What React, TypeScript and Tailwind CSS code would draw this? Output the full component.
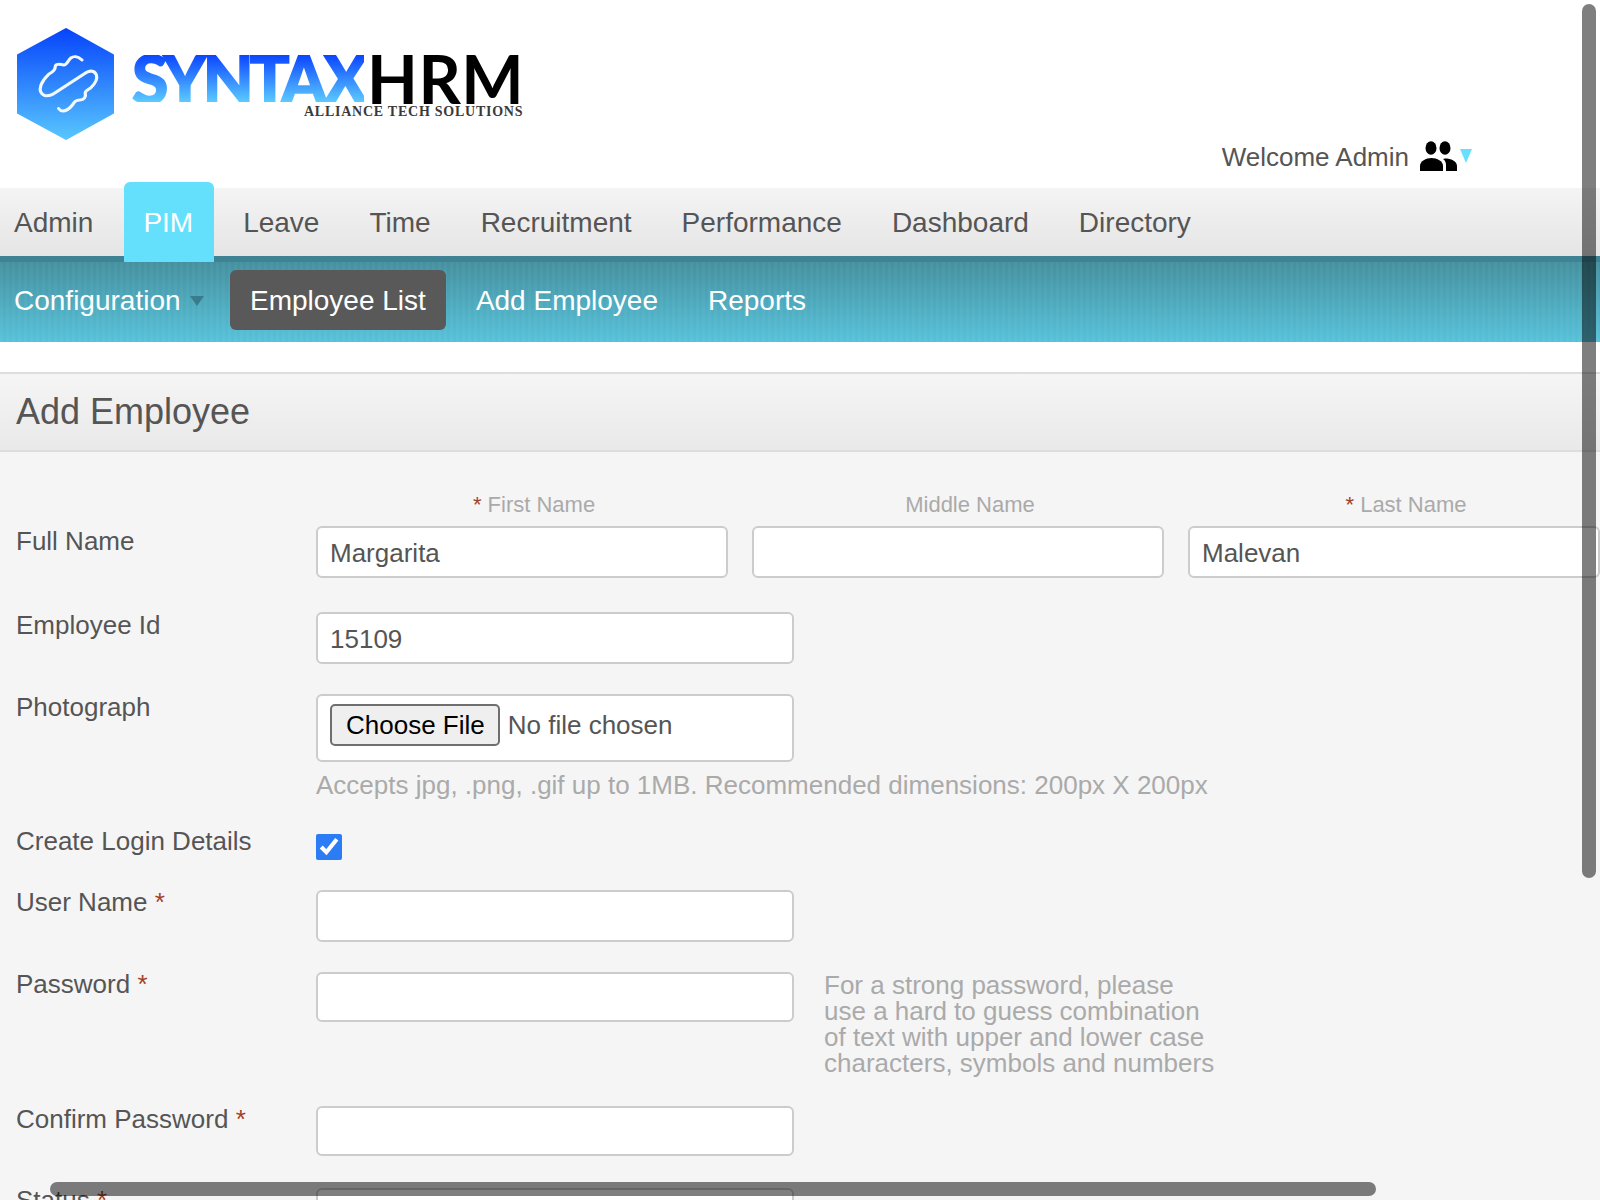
const topMenu = ["Leave", "Time", "Recruitment", "Performance", "Dashboard", "Directory"];
const inputClass = "rounded-[6px] border-2 border-[#cccccc] bg-white px-[12px] pt-[2px] text-[26px] text-[#555555] outline-none";
const nameHintClass = "mb-[10px] h-[24px] pl-[24px] pt-[1px] text-center text-[22px] leading-[24px] text-[#aaaaaa]";

function Required() {
  return <span className="text-[#a33f27]">*</span>;
}

function Logo() {
  return (
    <div className="flex items-start pl-[17px] pt-[28px]">
      <svg viewBox="16 28 91 112" preserveAspectRatio="none" className="h-[112px] w-[97px] shrink-0">
        <defs>
          <linearGradient id="hexFill" x1="0" y1="0" x2="0" y2="1">
            <stop offset="0" stopColor="#0644fb" />
            <stop offset="1" stopColor="#58c6ff" />
          </linearGradient>
        </defs>
        <path d="M62 29 L106 55 V113 L62 139 L17 113 V55 Z" fill="url(#hexFill)" stroke="url(#hexFill)" strokeWidth="2" strokeLinejoin="round" />
        <path
          d="M77 60 C73 56 69 56 66.5 58 C64 60 63 65 60 65 C56 64 52 64 52 66 C52 70 50 72 46 74 C43 77 40 81 38.5 85 C37 90 38 94 42 95.5 C45 96 47 96 50 94 L81 72.5 C85 70 89 71 90.5 75 C92 80 88 85 85 88 C82 90 80 91 80 93 C81 97 79 100 75 100 C71 100 70 102 68 105 C65 109 62 111 59 111 C57 111 56 110 55 108.5"
          fill="none"
          stroke="#f2f9ff"
          strokeWidth="3"
          strokeLinecap="round"
          strokeLinejoin="round"
        />
      </svg>
      <div className="ml-[18px] mt-[27px] flex flex-col items-end font-['Lato',sans-serif]">
        <div className="flex">
          <span className="bg-[linear-gradient(180deg,#0a45ff,#5ccaff)] bg-clip-text text-[66px] font-black leading-[47px] tracking-[-4px] text-transparent [-webkit-text-stroke:1.5px_transparent]">SYNTAX</span>
          <span className="ml-[3px] text-[66px] font-bold leading-[47px] tracking-[0.5px] text-black">HRM</span>
        </div>
        <span className="mr-[1px] mt-[4px] font-['Liberation_Serif',serif] text-[14px] font-bold leading-[11px] tracking-[0.75px] text-[#3a3a3a]">ALLIANCE TECH SOLUTIONS</span>
      </div>
    </div>
  );
}

function PeopleIcon() {
  return (
    <svg viewBox="0 0 37 30" className="ml-[11px] mt-[4px] h-[30px] w-[37px] text-black" fill="currentColor">
      <ellipse cx="11" cy="7" rx="5.5" ry="6.8" />
      <ellipse cx="25" cy="7" rx="5.5" ry="6.8" />
      <path d="M0 30 V25 C0 20 6 17 11.5 17 C17 17 23 20 23 25 V30 Z" />
      <path d="M25 17.5 C31 17.5 37 20 37 25 V30 H26 V24 C26 21.5 25 19 23 18 Z" />
    </svg>
  );
}

function FieldRow({ label, labelClass, children, className }: { label: React.ReactNode; labelClass: string; children: React.ReactNode; className: string }) {
  return (
    <div className={`flex items-start ${className}`}>
      <label className={`ml-[16px] w-[300px] shrink-0 text-[26px] leading-[30px] ${labelClass}`}>{label}</label>
      {children}
    </div>
  );
}

export default function App() {
  return (
    <div className="relative h-[1200px] w-[1600px] overflow-hidden bg-white font-['Liberation_Sans',Arial,sans-serif] text-[#555555]">
      <header className="flex h-[188px] justify-between">
        <Logo />
        <div className="flex items-start pr-[128px] pt-[137px]">
          <span className="text-[26px] leading-[40px]">Welcome Admin</span>
          <PeopleIcon />
          <span className="ml-[3px] mt-[12px] h-0 w-0 border-x-[6px] border-t-[14px] border-x-transparent border-t-[#66e0ff]" />
        </div>
      </header>

      <nav className="flex h-[68px] items-center gap-[10px] bg-[linear-gradient(180deg,#f4f4f4,#e5e5e5)] text-[28px]">
        <a className="pl-[14px] pr-[21px] pt-[2px]">Admin</a>
        <a className="z-10 -mr-[1px] flex h-[80px] items-center rounded-t-[6px] bg-[#64e0fd] pl-[19px] pr-[21px] pt-[2px] text-white">PIM</a>
        {topMenu.map((item) => (
          <a key={item} className="px-[20px] pt-[2px]">{item}</a>
        ))}
      </nav>

      <div className="h-[86px] border-t-[6px] border-[#3f8294] bg-[repeating-linear-gradient(90deg,rgba(255,255,255,0.035)_0,rgba(255,255,255,0.035)_3px,transparent_3px,transparent_6px),linear-gradient(180deg,#44909f,#56c2da)]">
        <div className="flex items-center gap-[10px] pt-[8px] text-[28px] text-white">
          <a className="flex w-[220px] items-center pl-[14px] pt-[2px]">
            Configuration
            <span className="ml-[9px] mt-[-1px] h-0 w-0 border-x-[7px] border-t-[10px] border-x-transparent border-t-[#3a7c8e]" />
          </a>
          <a className="flex h-[60px] items-center rounded-[6px] bg-[#595959] px-[20px] pt-[2px]">Employee List</a>
          <a className="px-[20px] pt-[2px]">Add Employee</a>
          <a className="px-[20px] pt-[2px]">Reports</a>
        </div>
      </div>

      <div className="mt-[30px] flex h-[80px] items-center border-y-2 border-[#dddddd] bg-[linear-gradient(180deg,#f5f5f5,#e9e9e9)] pl-[16px]">
        <h1 className="text-[36px] font-normal">Add Employee</h1>
      </div>

      <form className="h-[748px] bg-[#f5f5f5] pt-[40px]">
        <FieldRow className="" labelClass="mt-[34px]" label="Full Name">
          <div className="flex gap-[24px]">
            <div className="flex flex-col">
              <span className={nameHintClass}><Required /> First Name</span>
              <input defaultValue="Margarita" className={`${inputClass} h-[52px] w-[412px]`} />
            </div>
            <div className="flex flex-col">
              <span className={nameHintClass}>Middle Name</span>
              <input className={`${inputClass} h-[52px] w-[412px]`} />
            </div>
            <div className="flex flex-col">
              <span className={nameHintClass}><Required /> Last Name</span>
              <input defaultValue="Malevan" className={`${inputClass} h-[52px] w-[412px]`} />
            </div>
          </div>
        </FieldRow>

        <FieldRow className="mt-[34px]" labelClass="-mt-[2px]" label="Employee Id">
          <input defaultValue="15109" className={`${inputClass} h-[52px] w-[478px]`} />
        </FieldRow>

        <FieldRow className="mt-[30px]" labelClass="-mt-[2px]" label="Photograph">
          <input
            type="file"
            className="h-[68px] w-[478px] rounded-[6px] border-2 border-[#cccccc] bg-white px-[12px] py-[8px] text-[26px] text-[#555555] file:mr-[8px] file:h-[42px] file:rounded-[5px] file:border-2 file:border-[#6f6f6f] file:bg-[#efefef] file:pl-[14px] file:pr-[13px] file:text-black"
          />
        </FieldRow>
        <p className="ml-[316px] mt-[8px] text-[26px] leading-[30px] text-[#aaaaaa]">Accepts jpg, .png, .gif up to 1MB. Recommended dimensions: 200px X 200px</p>

        <FieldRow className="mt-[34px]" labelClass="-mt-[8px]" label="Create Login Details">
          <input type="checkbox" defaultChecked className="m-0 h-[26px] w-[26px] accent-[#2c7cf6]" />
        </FieldRow>

        <FieldRow className="mt-[30px]" labelClass="-mt-[3px]" label={<>User Name <Required /></>}>
          <input className={`${inputClass} h-[52px] w-[478px]`} />
        </FieldRow>

        <FieldRow className="mt-[30px]" labelClass="-mt-[3px]" label={<>Password <Required /></>}>
          <input type="password" className={`${inputClass} h-[50px] w-[478px]`} />
          <p className="ml-[30px] w-[392px] text-[26px] leading-[26px] text-[#aaaaaa]">
            For a strong password, please use a hard to guess combination of text with upper and lower case characters, symbols and numbers
          </p>
        </FieldRow>

        <FieldRow className="mt-[30px]" labelClass="-mt-[2px]" label={<>Confirm Password <Required /></>}>
          <input type="password" className={`${inputClass} h-[50px] w-[478px]`} />
        </FieldRow>

        <FieldRow className="mt-[32px]" labelClass="-mt-[3px]" label={<>Status <Required /></>}>
          <input className={`${inputClass} h-[52px] w-[478px]`} />
        </FieldRow>
      </form>

      {/* overlay scrollbars */}
      <div className="absolute right-[4px] top-[4px] h-[874px] w-[14px] rounded-full bg-black/50" />
      <div className="absolute bottom-[4px] left-[50px] h-[14px] w-[1326px] rounded-full bg-black/50" />
    </div>
  );
}
